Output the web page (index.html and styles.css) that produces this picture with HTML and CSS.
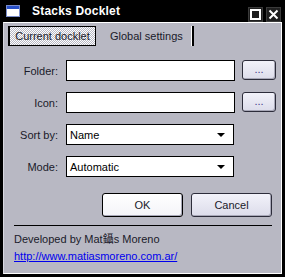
FILE: index.html
```html
<!DOCTYPE html>
<html>
<head>
<meta charset="utf-8">
<link rel="stylesheet" href="styles.css">
</head>
<body>
<div class="window">
  <div class="titlebar">
    <div class="app-icon"><span class="app-icon-bar"></span></div>
    <div class="title">Stacks Docklet</div>
    <div class="caption-buttons">
      <div class="cap-btn">
        <svg width="11" height="11" viewBox="0 0 11 11"><rect x="1" y="1" width="9" height="9" fill="none" stroke="#fff" stroke-width="2"/></svg>
      </div>
      <div class="cap-btn">
        <svg width="11" height="11" viewBox="0 0 11 11"><path d="M1.5 1.5 L9.5 9.5 M9.5 1.5 L1.5 9.5" stroke="#fff" stroke-width="2"/></svg>
      </div>
    </div>
  </div>
  <div class="panel">
    <div class="tabs">
      <div class="tab tab-active"><span class="tab-label">Current docklet</span></div>
      <div class="tab"><span class="tab-label">Global settings</span></div>
    </div>
    <div class="form">
      <label class="lbl">Folder:</label>
      <div class="input"></div>
      <div class="btn btn-small">...</div>

      <label class="lbl">Icon:</label>
      <div class="input"></div>
      <div class="btn btn-small">...</div>

      <label class="lbl">Sort by:</label>
      <div class="select"><span>Name</span><span class="arrow"></span></div>
      <div></div>

      <label class="lbl">Mode:</label>
      <div class="select"><span>Automatic</span><span class="arrow"></span></div>
      <div></div>
    </div>
    <div class="actions">
      <div class="btn btn-default">OK</div>
      <div class="btn">Cancel</div>
    </div>
    <div class="sep"></div>
    <div class="credits">
      <div>Developed by Mat鑷s Moreno</div>
      <a class="link" href="#">http://www.matiasmoreno.com.ar/</a>
    </div>
  </div>
</div>
</body>
</html>
```

FILE: styles.css
```css
html, body {
  margin: 0;
  padding: 0;
  background: #000;
}
body {
  font-family: "Liberation Sans", "Noto Sans CJK SC", sans-serif;
  font-size: 11px;
  color: #000;
}
.window {
  width: 285px;
  height: 277px;
  background: #000;
  display: flex;
  flex-direction: column;
  padding: 0 3px 3px 3px;
  box-sizing: border-box;
}
.titlebar {
  height: 22px;
  display: flex;
  align-items: center;
  flex-shrink: 0;
}
.app-icon {
  width: 14px;
  height: 12px;
  margin-left: 3px;
  background: #fff;
  box-sizing: border-box;
  border: 1px solid #7a8cc8;
  display: flex;
  flex-direction: column;
}
.app-icon-bar {
  height: 3px;
  background: #2850c8;
}
.title {
  margin-left: 12px;
  color: #fff;
  font-weight: bold;
  font-size: 12px;
  letter-spacing: 0.2px;
}
.caption-buttons {
  margin-left: auto;
  display: flex;
  gap: 3px;
  margin-top: 7px;
  margin-right: 1px;
}
.cap-btn {
  width: 15px;
  height: 15px;
  background: #1e1e1e;
  border: 1px solid #3a3a3a;
  box-sizing: border-box;
  display: flex;
  align-items: center;
  justify-content: center;
}
.panel {
  flex: 1;
  background: #b8b8c3;
  border-top: 1px solid #fff;
  border-right: 1px solid #fff;
  border-bottom: 1px solid #fff;
  border-left: 1px solid #d8d8e0;
  display: flex;
  flex-direction: column;
  padding: 3px 9px 0 4px;
}
.tabs {
  display: flex;
  height: 20px;
}
.tab {
  height: 20px;
  display: flex;
  align-items: center;
  padding: 0 9px 0 12px;
  border-right: 2px solid #000;
  box-shadow: inset -1px 0 0 #fff;
  margin-left: 2px;
  white-space: nowrap;
}
.tab-label {
  color: #1a1a2a;
}
.tab-active {
  margin-left: 0;
  padding: 0;
  border: 1px solid #000;
  border-left-width: 2px;
  box-shadow: none;
  background: repeating-conic-gradient(#ffffff 0 25%, #b8b8c3 0 50%) 0 0 / 2px 2px;
  width: 88px;
  box-sizing: border-box;
  justify-content: center;
}
.form {
  display: grid;
  grid-template-columns: 44px 169px 33px;
  grid-auto-rows: 21px;
  column-gap: 8px;
  row-gap: 11px;
  margin-top: 14px;
  padding-left: 6px;
  align-items: stretch;
}
.form > :nth-child(3n) {
  margin-left: -1px;
}
.lbl {
  text-align: right;
  align-self: center;
  color: #1a1a2a;
  white-space: nowrap;
}
.input {
  background: #fff;
  border: 1px solid #000;
}
.select {
  background: #fff;
  border: 1px solid #000;
  display: flex;
  align-items: center;
  padding: 0 8px 0 3px;
  margin-right: 1px;
}
.arrow {
  margin-left: auto;
  width: 0;
  height: 0;
  border-left: 4px solid transparent;
  border-right: 4px solid transparent;
  border-top: 4px solid #000;
}
.btn {
  box-sizing: border-box;
  border: 1px solid #2c2c3a;
  border-radius: 3px;
  background: linear-gradient(#f2f2fa, #dcdcea);
  display: flex;
  align-items: center;
  justify-content: center;
  color: #1a1a2a;
  box-shadow: inset -1px -1px 0 #a8a8b8;
}
.btn-small {
  height: 20px;
  align-self: start;
  color: #40408a;
  padding-bottom: 2px;
}
.actions {
  display: flex;
  justify-content: flex-end;
  gap: 8px;
  margin-top: 16px;
}
.actions .btn {
  width: 81px;
  height: 24px;
}
.btn-default {
  background: linear-gradient(#ffffff, #f4f4f8);
  border-color: #000;
}
.sep {
  height: 1px;
  background: #000;
  margin: 8px 0 0 6px;
}
.credits {
  padding-left: 6px;
  margin-top: 5px;
  line-height: 17px;
  color: #1a1a2a;
}
.link {
  color: #0000ee;
  text-decoration: underline;
}
```
